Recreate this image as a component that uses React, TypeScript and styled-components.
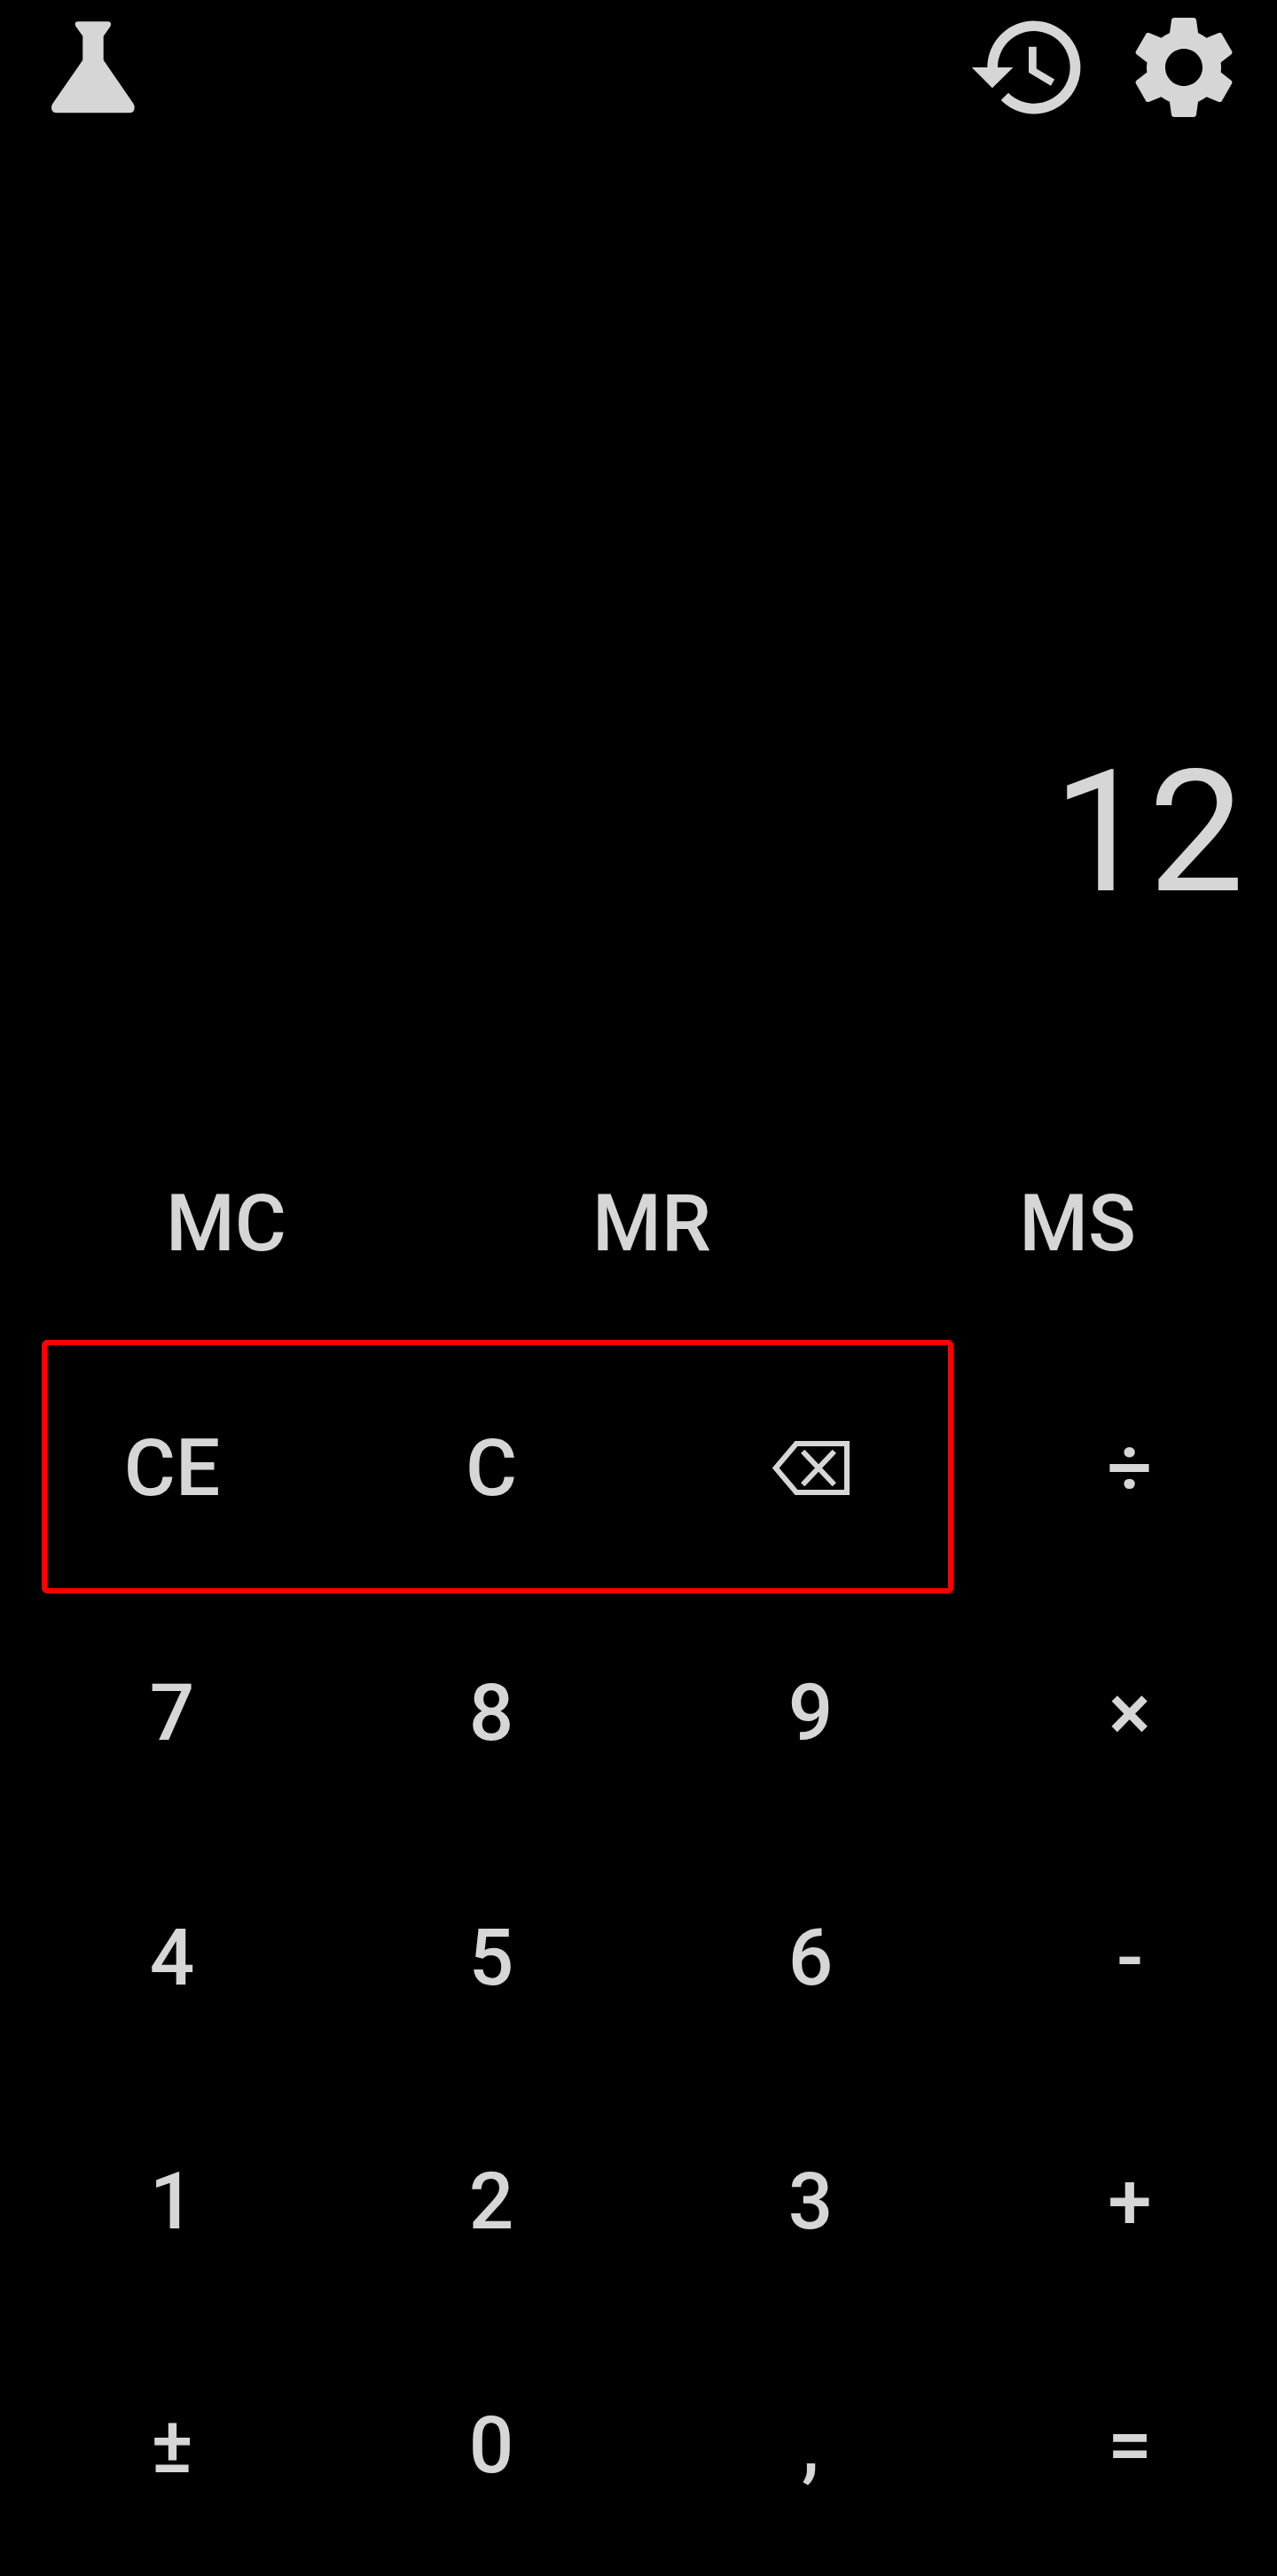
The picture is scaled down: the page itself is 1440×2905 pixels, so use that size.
import React from 'react';
import styled, { createGlobalStyle } from 'styled-components';

const Global = createGlobalStyle`
  * { box-sizing: border-box; }
  html, body { margin: 0; background: #000; }
`;

const Screen = styled.main`
  width: 1440px;
  height: 2905px;
  background: #000;
  color: #d6d6d6;
  font-family: Roboto, "Liberation Sans", sans-serif;
  display: flex;
  flex-direction: column;
  overflow: hidden;
`;

const TopBar = styled.header`
  display: flex;
  align-items: center;
  gap: 35px;
  height: 152px;
  padding: 0 35px;
`;

const IconButton = styled.button<{ $push?: boolean }>`
  display: flex;
  padding: 0;
  border: 0;
  background: none;
  color: inherit;
  margin-left: ${(p) => (p.$push ? 'auto' : '0')};
`;

const Glyph = styled.svg`
  display: block;
  width: 140px;
  height: 140px;
  fill: currentColor;
`;

const BackspaceGlyph = styled.svg`
  display: block;
  width: 88px;
  height: 62px;
  fill: none;
  stroke: currentColor;
  stroke-width: 6;
`;

const Display = styled.output`
  display: flex;
  justify-content: flex-end;
  height: 1090px;
  padding: 673px 37px 0 0;
  font-size: 192px;
  line-height: 228px;
`;

const MemoryRow = styled.div`
  display: grid;
  grid-template-columns: repeat(3, 480px);
  height: 276px;
  padding-left: 15px;
`;

const Keypad = styled.div`
  position: relative;
  display: grid;
  grid-template-columns: repeat(4, 360px);
  grid-template-rows: 276px 276px 276px 274px 276px;
  padding-left: 14px;
`;

const Highlight = styled.div`
  position: absolute;
  left: 47px;
  top: -7px;
  width: 1028px;
  height: 286px;
  border: 6px solid #f00;
  border-radius: 6px;
  pointer-events: none;
`;

const Key = styled.button`
  display: flex;
  align-items: center;
  justify-content: center;
  padding: 0;
  border: 0;
  background: none;
  color: inherit;
  font: 500 89px/104px Roboto, "Liberation Sans", sans-serif;
`;

const keys = ['CE', 'C', 'back', '÷', '7', '8', '9', '×', '4', '5', '6', '-', '1', '2', '3', '+', '±', '0', ',', '='];

const Flask = () => (
  <Glyph viewBox="0 0 140 140">
    <path d="M53 18.3H87Q90 18.3 90 21.3Q90 23 89 24.6L81.7 34.7V61.7L115.2 110.5Q116.7 112.7 116.7 115.3Q116.7 121.3 110.7 121.3H29.3Q23 121.3 23 115.3Q23 112.7 24.6 110.5L58.3 61.7V34.7L51 24.6Q49.7 23 49.7 21.3Q49.7 18.3 53 18.3Z" />
  </Glyph>
);

const History = () => (
  <Glyph viewBox="0 0 24 24">
    <path d="M13 3a9 9 0 0 0-9 9H1l3.96 4L9 12H6a7 7 0 1 1 2.06 4.94l-1.42 1.42A9 9 0 1 0 13 3zm-1 5v5l4.28 2.54.72-1.21-3.5-2.08V8H12z" />
  </Glyph>
);

const Gear = () => (
  <Glyph viewBox="0 0 24 24">
    <path d="M19.14 12.94c.04-.3.06-.61.06-.94 0-.32-.02-.64-.07-.94l2.03-1.58c.18-.14.23-.41.12-.61l-1.92-3.32c-.12-.22-.37-.29-.59-.22l-2.39.96c-.5-.38-1.03-.7-1.62-.94l-.36-2.54c-.04-.24-.24-.41-.48-.41h-3.84c-.24 0-.43.17-.47.41l-.36 2.54c-.59.24-1.13.57-1.62.94l-2.39-.96c-.22-.08-.47 0-.59.22L2.74 8.87c-.12.21-.08.47.12.61l2.03 1.58c-.05.3-.09.63-.09.94s.02.64.07.94l-2.03 1.58c-.18.14-.23.41-.12.61l1.92 3.32c.12.22.37.29.59.22l2.39-.96c.5.38 1.03.7 1.62.94l.36 2.54c.05.24.24.41.48.41h3.84c.24 0 .44-.17.47-.41l.36-2.54c.59-.24 1.13-.56 1.62-.94l2.39.96c.22.08.47 0 .59-.22l1.92-3.32c.12-.22.07-.47-.12-.61l-2.01-1.58zM12 15.6c-1.98 0-3.6-1.62-3.6-3.6s1.62-3.6 3.6-3.6 3.6 1.62 3.6 3.6-1.62 3.6-3.6 3.6z" />
  </Glyph>
);

const Backspace = () => (
  <BackspaceGlyph viewBox="0 0 88 62">
    <path d="M28 3H85V58H28L4.7 30.5Z" />
    <path d="M35.2 11.8L70.8 49.2M70.8 11.8L35.2 49.2" />
  </BackspaceGlyph>
);

export default function App() {
  return (
    <Screen>
      <Global />
      <TopBar>
        <IconButton aria-label="Scientific mode"><Flask /></IconButton>
        <IconButton aria-label="History" $push><History /></IconButton>
        <IconButton aria-label="Settings"><Gear /></IconButton>
      </TopBar>
      <Display>12</Display>
      <MemoryRow>{['MC', 'MR', 'MS'].map((k) => <Key key={k}>{k}</Key>)}</MemoryRow>
      <Keypad>
        {keys.map((k) => (
          <Key key={k} aria-label={k === 'back' ? 'Backspace' : undefined}>
            {k === 'back' ? <Backspace /> : k}
          </Key>
        ))}
        <Highlight />
      </Keypad>
    </Screen>
  );
}
